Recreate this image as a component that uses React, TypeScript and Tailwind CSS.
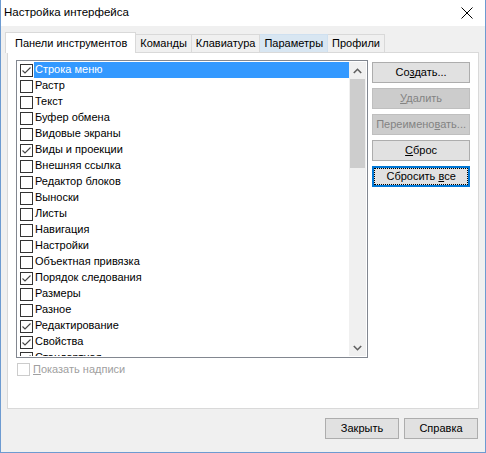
import { ReactNode } from "react";

const ITEMS: [string, boolean][] = [
  ["Строка меню", true],
  ["Растр", false],
  ["Текст", false],
  ["Буфер обмена", false],
  ["Видовые экраны", false],
  ["Виды и проекции", true],
  ["Внешняя ссылка", false],
  ["Редактор блоков", false],
  ["Выноски", false],
  ["Листы", false],
  ["Навигация", false],
  ["Настройки", false],
  ["Объектная привязка", false],
  ["Порядок следования", true],
  ["Размеры", false],
  ["Разное", false],
  ["Редактирование", true],
  ["Свойства", true],
  ["Стандартная", true],
];

const TABS = ["Панели инструментов", "Команды", "Клавиатура", "Параметры", "Профили"];

function CheckBox({ checked, disabled }: { checked?: boolean; disabled?: boolean }) {
  return (
    <span
      className={
        "flex h-[13px] w-[13px] shrink-0 items-center justify-center border bg-white " +
        (disabled ? "border-[#cccccc]" : "border-[#333333]")
      }
    >
      {checked && (
        <svg width="11" height="11" viewBox="0 0 11 11">
          <path d="M1.5 5.5 L4 8 L9.5 2.5" fill="none" stroke="#444" strokeWidth="1.1" />
        </svg>
      )}
    </span>
  );
}

function Btn({
  children,
  disabled,
  focused,
  className = "",
}: {
  children: ReactNode;
  disabled?: boolean;
  focused?: boolean;
  className?: string;
}) {
  let look = "border border-[#adadad] bg-[#e1e1e1] text-black";
  if (disabled) look = "border border-[#bfbfbf] bg-[#cccccc] text-[#838383]";
  if (focused) look = "border-2 border-[#0078d7] bg-[#e1e1e1] text-black";
  return (
    <div className={"flex h-[21px] items-center justify-center " + look + " " + className}>
      {focused ? (
        <span className="flex h-full w-full items-center justify-center border border-dotted border-black">
          <span>{children}</span>
        </span>
      ) : (
        <span>{children}</span>
      )}
    </div>
  );
}

export default function App() {
  return (
    <div
      className="flex h-[453px] w-[486px] flex-col border border-t-0 border-[#6d9bd1] bg-[#f0f0f0] text-[11px] text-black"
      style={{ fontFamily: '"Liberation Sans", Arial, sans-serif' }}
    >
      {/* title bar */}
      <div className="flex h-[26px] shrink-0 items-center justify-between bg-white pl-[3px] pr-[12px]">
        <span className="text-[11.5px]">Настройка интерфейса</span>
        <svg width="12" height="12" viewBox="0 0 12 12">
          <path d="M0.5 0.5 L11.5 11.5 M11.5 0.5 L0.5 11.5" stroke="#000" strokeWidth="1" />
        </svg>
      </div>

      <div className="flex flex-1 flex-col px-[6px] pt-[7px]">
        {/* tabs */}
        <div className="relative z-10 flex h-[19px] items-end">
          {TABS.map((t, i) =>
            i === 0 ? (
              <div
                key={t}
                className="-mb-px -ml-[2px] flex h-[21px] items-center border border-b-0 border-[#d9d9d9] bg-white pl-[9px] pr-[8px]"
              >
                {t}
              </div>
            ) : (
              <div
                key={t}
                className={
                  "flex h-[18px] items-center border border-l-0 border-b-0 px-[4px] " +
                  (i === 3 ? "border-[#cfe0f0] bg-[#d8e6f2]" : "border-[#d9d9d9] bg-[#f0f0f0]")
                }
              >
                {t}
              </div>
            )
          )}
        </div>

        {/* tab page */}
        <div className="flex h-[357px] flex-col border border-[#d9d9d9] bg-white px-[8px] pt-[7px]">
          <div className="flex gap-[4px]">
            <div className="flex h-[298px] w-[353px] border border-[#828790] bg-white p-px">
              <div className="flex-1 overflow-hidden">
                {ITEMS.map(([label, checked], i) => (
                  <div key={label} className="flex h-[16px] items-center pl-[2px]">
                    <CheckBox checked={checked} />
                    <span
                      className={
                        "ml-px flex h-[16px] flex-1 items-center pb-px pl-px " +
                        (i === 0 ? "bg-[#3399ff] text-white" : "")
                      }
                    >
                      {label}
                    </span>
                  </div>
                ))}
              </div>
              {/* scrollbar */}
              <div className="flex w-[17px] flex-col bg-[#f0f0f0]">
                <div className="flex h-[17px] items-center justify-center">
                  <svg width="9" height="6" viewBox="0 0 9 6">
                    <path d="M0.8 5 L4.5 1.3 L8.2 5" fill="none" stroke="#606060" strokeWidth="1.6" />
                  </svg>
                </div>
                <div className="mx-px h-[89px] bg-[#cdcdcd]" />
                <div className="flex-1" />
                <div className="flex h-[17px] items-center justify-center">
                  <svg width="9" height="6" viewBox="0 0 9 6">
                    <path d="M0.8 1 L4.5 4.7 L8.2 1" fill="none" stroke="#606060" strokeWidth="1.6" />
                  </svg>
                </div>
              </div>
            </div>

            <div className="flex w-[98px] flex-col gap-[5px] pt-[2px]">
              <Btn>
                Со<u>з</u>дать...
              </Btn>
              <Btn disabled>
                <u>У</u>далить
              </Btn>
              <Btn disabled>
                Переимено<u>в</u>ать...
              </Btn>
              <Btn>
                <u>С</u>брос
              </Btn>
              <Btn focused>
                Сбросить <u>в</u>се
              </Btn>
            </div>
          </div>

          <div className="mt-[3px] flex items-center gap-[3px] pl-[1px] text-[#a0a0a0]">
            <CheckBox disabled />
            <span>
              <u>П</u>оказать надписи
            </span>
          </div>
        </div>

        {/* bottom buttons */}
        <div className="flex justify-end gap-[5px] pr-[1px] pt-[9px]">
          <Btn className="w-[74px]">Закрыть</Btn>
          <Btn className="w-[74px]">Справка</Btn>
        </div>
      </div>
    </div>
  );
}
